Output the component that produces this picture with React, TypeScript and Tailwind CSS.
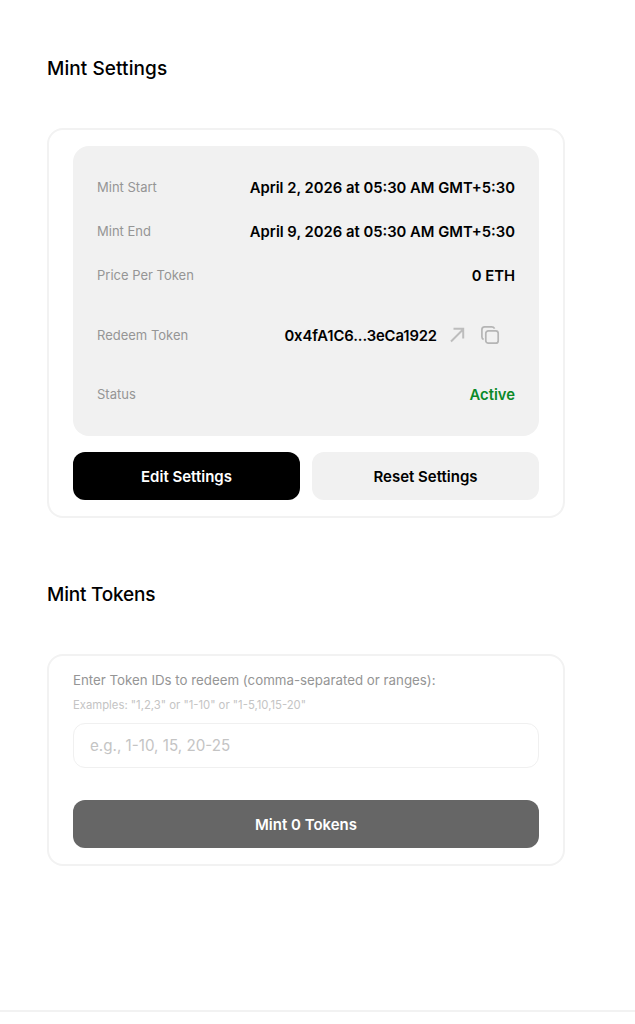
import React from "react";

const font = "font-['Inter','Liberation_Sans',sans-serif]";

function Row({ label, children, className = "" }: { label: string; children: React.ReactNode; className?: string }) {
  return (
    <div className={`flex items-center justify-between ${className}`}>
      <span className="text-[13px] leading-5 text-[#959595]">{label}</span>
      {children}
    </div>
  );
}

const Value = ({ children, className = "" }: { children: React.ReactNode; className?: string }) => (
  <span className={`pt-[2px] text-[14.8px] leading-5 font-semibold text-black ${className}`}>{children}</span>
);

export default function App() {
  return (
    <div className={`${font} bg-white min-h-[1024px] flex flex-col`}>
      <main className="w-[518px] ml-[47px] h-[1010px]">
        <h2 className="pt-[57px] text-[19px] leading-6 font-medium tracking-[0.08px] text-black">Mint Settings</h2>
        <section className="mt-[47px] border-2 border-[#f2f2f2] rounded-2xl px-6 py-4">
          <div className="bg-[#f1f1f1] rounded-2xl px-6 pt-[31px] pb-[31px] flex flex-col h-[290px]">
            <Row label="Mint Start" className="h-5"><Value>April 2, 2026 at 05:30 AM GMT+5:30</Value></Row>
            <Row label="Mint End" className="h-5 mt-6"><Value>April 9, 2026 at 05:30 AM GMT+5:30</Value></Row>
            <Row label="Price Per Token" className="h-5 mt-6"><Value>0 ETH</Value></Row>
            <Row label="Redeem Token" className="h-[52px] mt-6">
              <div className="flex items-center">
                <Value className="tracking-[-0.1px]">0x4fA1C6...3eCa1922</Value>
                <svg className="ml-[10px]" width="20" height="20" viewBox="0 0 20 20" fill="none" stroke="#bdbdbd" strokeWidth="2">
                  <path d="M4 16.5 16 4.5M6.5 3.8H16.2V13.5" />
                </svg>
                <svg className="ml-[13px] mr-[15px]" width="20" height="20" viewBox="0 0 20 20" fill="none" stroke="#b5b5b5" strokeWidth="1.7">
                  <rect x="5.8" y="5.8" width="12.4" height="12.4" rx="2.5" />
                  <path d="M3.6 14.6C2.6 14 1.9 13 1.9 11.7V4.7C1.9 3 3 1.9 4.7 1.9H11.7C13 1.9 14 2.5 14.6 3.6" />
                </svg>
              </div>
            </Row>
            <Row label="Status" className="h-5 mt-[23px]">
              <span className="pt-[2px] text-[14.8px] leading-5 font-semibold text-[#0b8a28]">Active</span>
            </Row>
          </div>
          <div className="mt-4 grid grid-cols-2 gap-3">
            <button className="h-12 pt-[2px] rounded-xl bg-black text-white text-[15px] font-semibold">Edit Settings</button>
            <button className="h-12 pt-[2px] rounded-xl bg-[#f1f1f1] text-black text-[15px] font-semibold">Reset Settings</button>
          </div>
        </section>

        <h2 className="mt-[65px] text-[19px] leading-6 font-medium tracking-[-0.2px] text-black">Mint Tokens</h2>
        <section className="mt-[47px] border-2 border-[#f2f2f2] rounded-2xl px-6 pb-4 pt-[14px]">
          <p className="text-[13.3px] leading-5 text-[#959595]">Enter Token IDs to redeem (comma-separated or ranges):</p>
          <p className="mt-[7px] text-[11.3px] leading-4 text-[#c4c4c4]">Examples: "1,2,3" or "1-10" or "1-5,10,15-20"</p>
          <input
            className="mt-[10px] block w-full h-[45px] rounded-xl border border-[#f0f0f0] px-4 text-[15.2px] outline-none placeholder:text-[#c4c4c4]"
            placeholder="e.g., 1-10, 15, 20-25"
          />
          <button className="mt-8 w-full h-12 pt-[2px] rounded-xl bg-[#666666] text-white text-[15px] font-semibold">Mint 0 Tokens</button>
        </section>
      </main>
      <footer className="border-t-2 border-[#f2f2f2] h-[14px]" />
    </div>
  );
}
